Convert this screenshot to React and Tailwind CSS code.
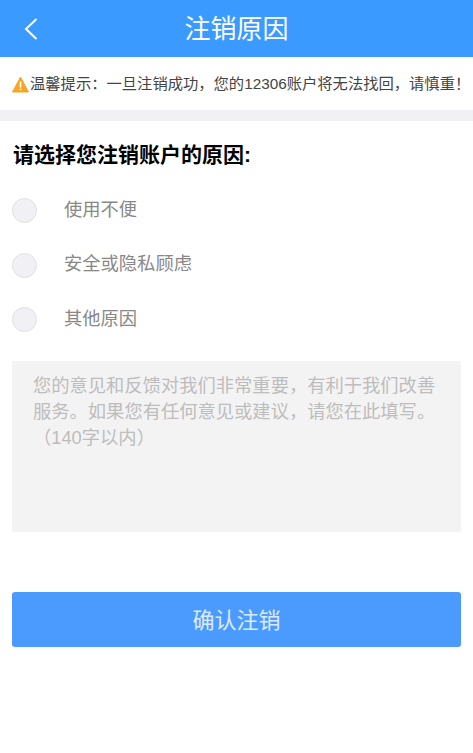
const reasons = ["使用不便", "安全或隐私顾虑", "其他原因"];

const App = () => {
  return (
    <div className="flex h-[753px] w-[473px] flex-col overflow-hidden bg-white font-['Liberation_Sans','Noto_Sans_CJK_SC',sans-serif]">
      <header className="relative flex h-[57px] items-center justify-center bg-[#3b9aff]">
        <svg className="absolute left-[24px] top-[18px] h-[22px] w-[14px]" viewBox="0 0 14 22" fill="none" stroke="white" strokeWidth="2">
          <path d="M12.5 1 L2 11 L12.5 21" />
        </svg>
        <h1 className="text-[26px] leading-none text-white">注销原因</h1>
      </header>

      <div className="flex h-[53px] items-center whitespace-nowrap pl-[12px] pt-[2px] text-[15.3px] text-[#444]">
        <svg className="mr-px h-[17px] w-[17px] shrink-0" viewBox="0 0 17 17">
          <path d="M8.5 1 L16.5 16 H0.5 Z" fill="#f5a623" stroke="#f5a623" strokeLinejoin="round" />
          <rect x="7.7" y="5.5" width="1.6" height="6" fill="white" />
          <rect x="7.7" y="12.6" width="1.6" height="1.6" fill="white" />
        </svg>
        <span>温馨提示：一旦注销成功，您的12306账户将无法找回，请慎重！</span>
      </div>

      <div className="h-[11px] bg-[#f0f0f5]" />

      <div className="flex flex-1 flex-col px-[12px]">
        <h2 className="mt-[20px] pl-px text-[21px] font-bold leading-[28px] text-black">请选择您注销账户的原因:</h2>

        <ul className="mt-[29px] flex flex-col gap-[29.5px]">
          {reasons.map((reason) => (
            <li key={reason} className="flex h-[25px] items-center">
              <span className="h-[25px] w-[25px] rounded-full border border-[#e0e0e6] bg-[#f0f0f5]" />
              <span className="mb-[2px] ml-[27px] text-[18.3px] text-[#888]">{reason}</span>
            </li>
          ))}
        </ul>

        <div className="mt-[29px] h-[171px] whitespace-nowrap rounded-[2px] bg-[#f3f3f3] px-[21px] pt-[12px] text-[18.3px] leading-[26px] text-[#bdbdbd]">
          您的意见和反馈对我们非常重要，有利于我们改善
          <br />
          服务。如果您有任何意见或建议，请您在此填写。
          <br />
          （140字以内）
        </div>

        <button className="mt-[60px] h-[55px] w-full rounded-[3px] bg-[#4b9bff] pt-[2px] text-[22px] text-white/80">确认注销</button>
      </div>
    </div>
  );
};

export default App;
